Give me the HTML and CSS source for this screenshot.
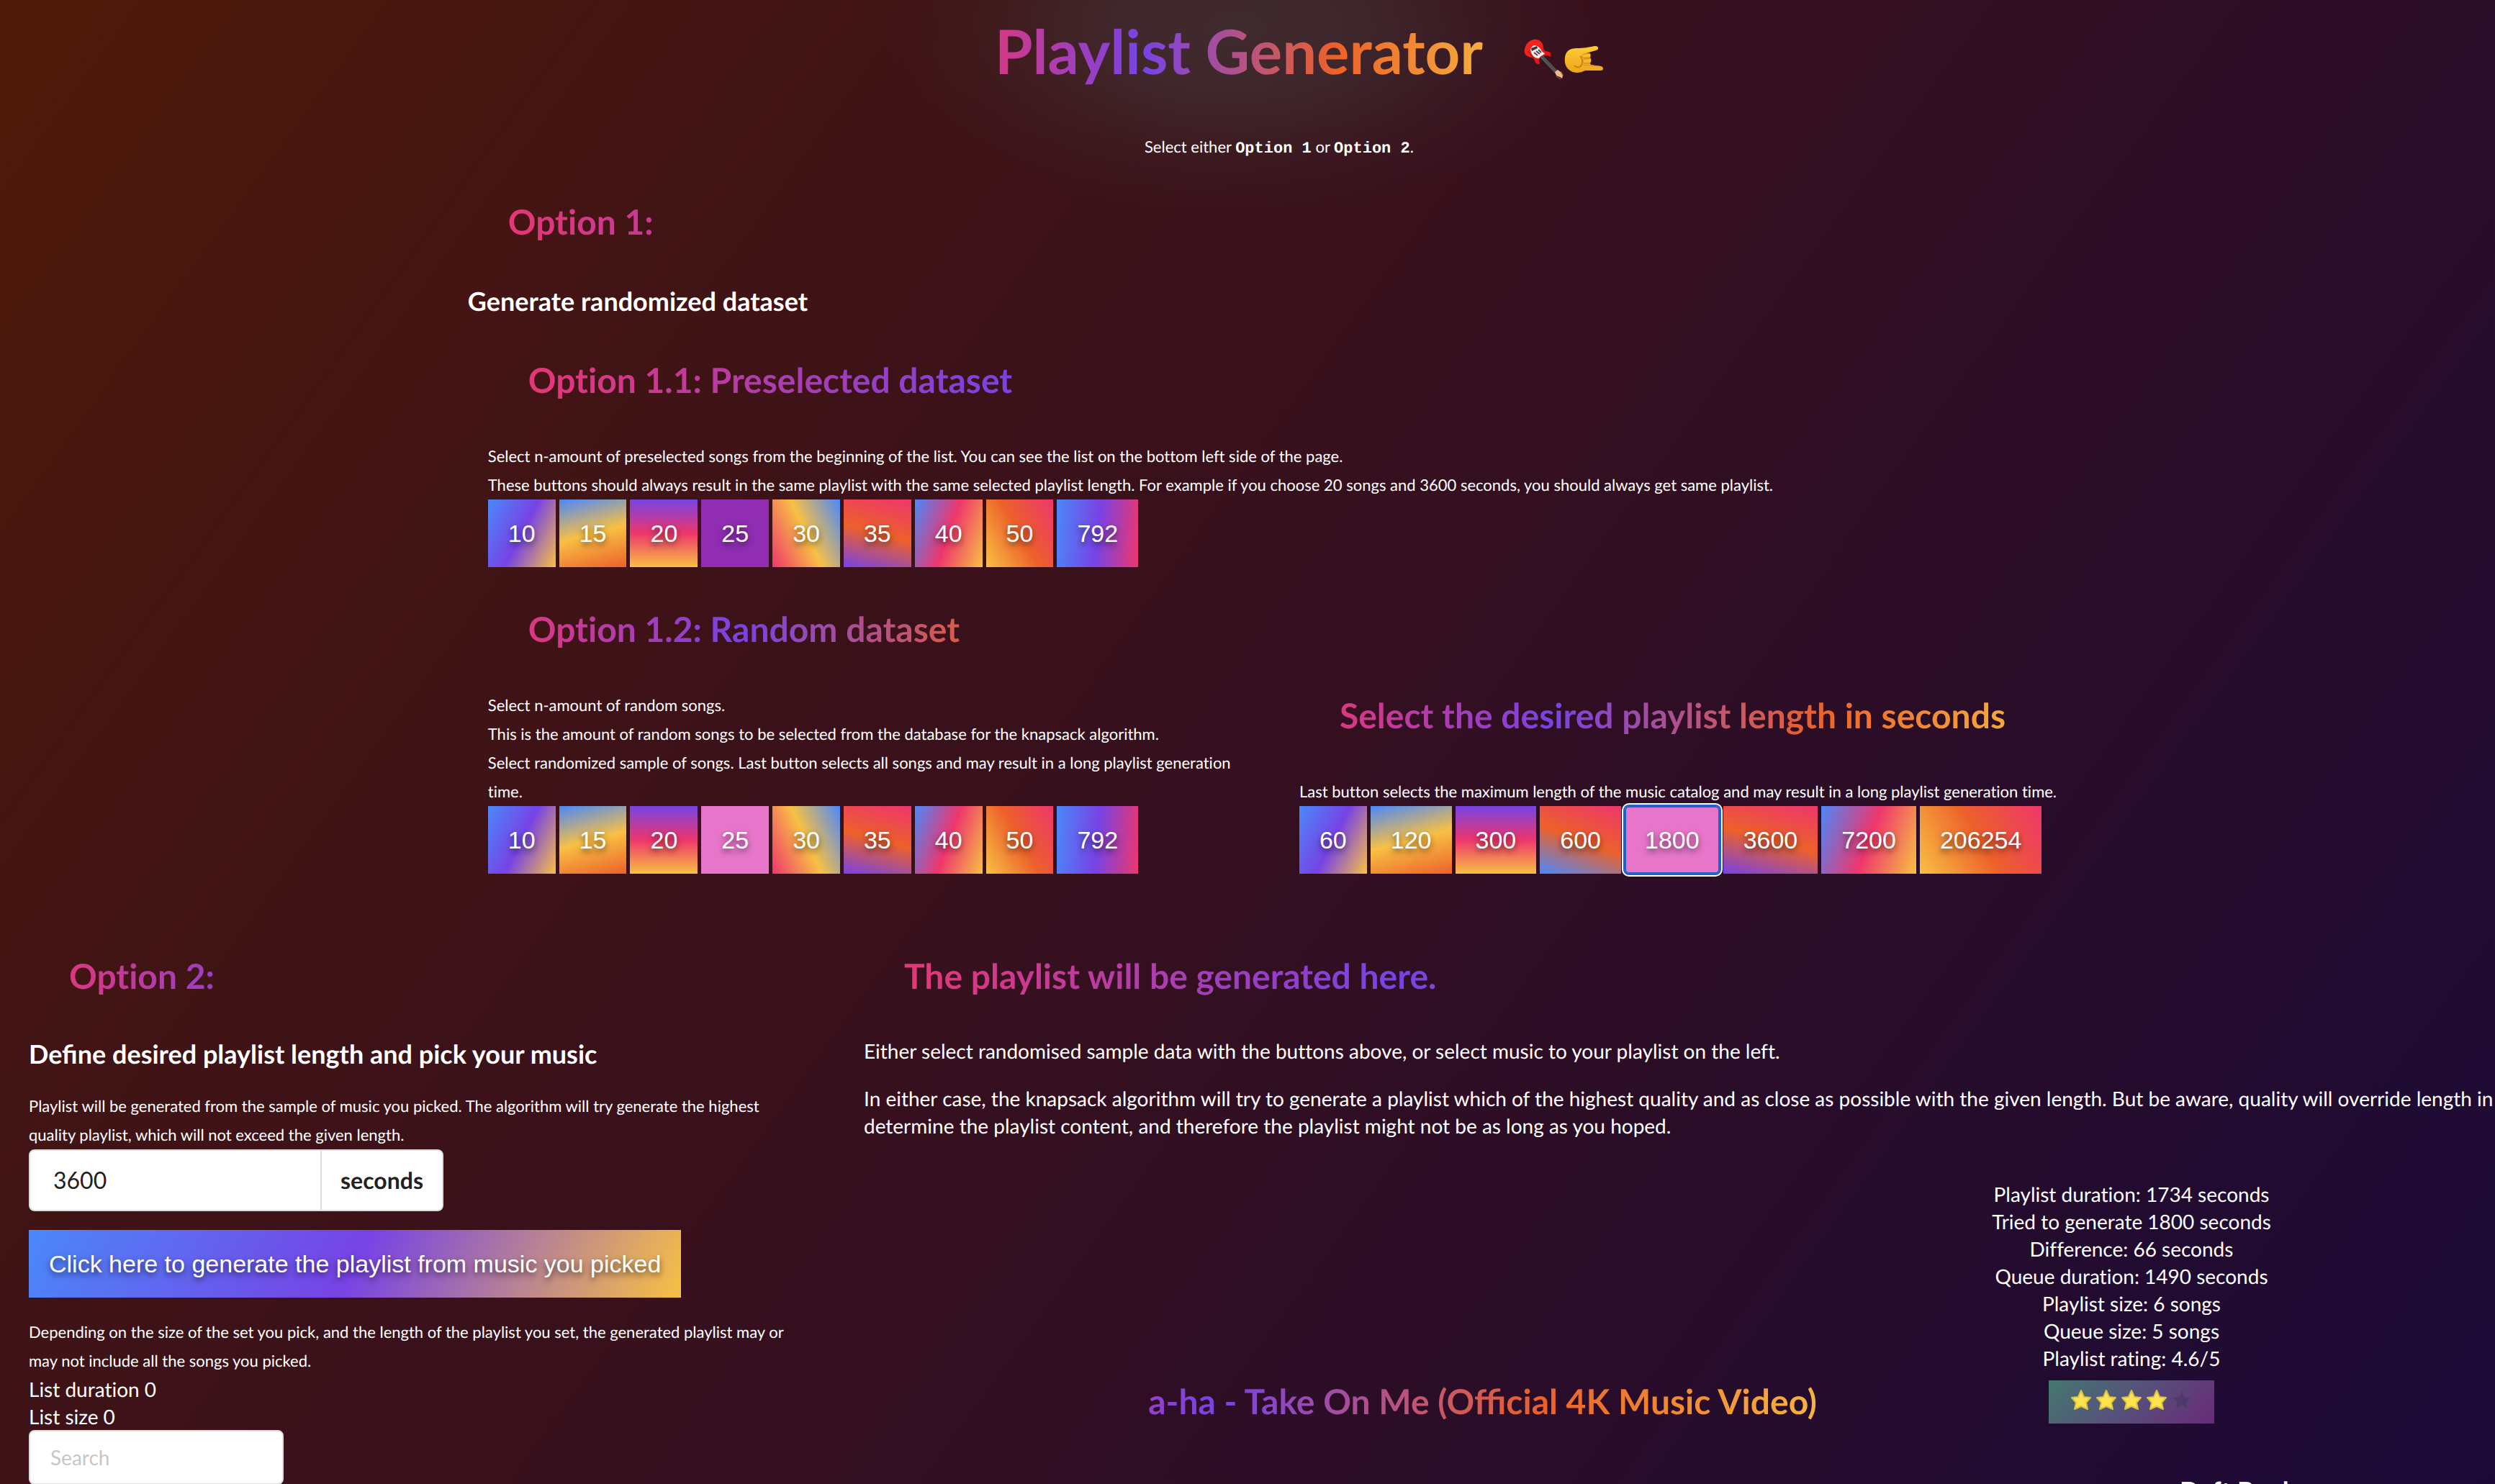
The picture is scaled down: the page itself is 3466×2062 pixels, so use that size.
FILE: index.html
```html
<!DOCTYPE html>
<html lang="en">
<head>
<meta charset="utf-8">
<title>Playlist Generator</title>
<link rel="stylesheet" href="styles.css">
</head>
<body>
<main class="page">
  <div class="top">
    <header class="masthead">
      <div class="title-row">
        <h1 class="gradient-text title">Playlist Generator</h1>
        <svg class="emoji" viewBox="0 0 56 58" role="img" aria-label="Guitar">
          <defs>
            <linearGradient id="gBody" x1="0" y1="0" x2="1" y2="1"><stop offset="0" stop-color="#ff2a1e"/><stop offset="1" stop-color="#d80f14"/></linearGradient>
          </defs>
          <path d="M25 24 L46 46" stroke="#4f4f52" stroke-width="5"/>
          <path d="M26 27 L45 47" stroke="#8c8c90" stroke-width="1" stroke-dasharray="1 3"/>
          <path d="M2 14 C4 5 12 0 18 1 C26 2 28 8 28 13 C29 18 32 17 36 18 C40 20 39 25 37 25 C35 22 31 24 27 24 C23 25 21 28 23 33 C23 36 20 36 17 33 C15 29 16 27 12 26 C6 25 0 22 2 14 Z" fill="url(#gBody)"/>
          <path d="M10 15 C12 9 16 8 19 10 C25 12 25 19 30 20 C28 23 24 23 22 27 C16 27 12 24 10 15 Z" fill="#f1eeee"/>
          <path d="M11 13 L19 10 L20 13 L12 17 Z" fill="#36343a"/>
          <path d="M15 19 L20 23 M18 17 L23 21 M21 15 L25 19" stroke="#4a484c" stroke-width="2"/>
          <path d="M7 17 L14 26" stroke="#45343a" stroke-width="1"/>
          <path d="M44 46 L48 43 L52 46 L55 51 L54 55 L51 53 L46 51 Z" fill="#f5b78c"/>
          <path d="M52 45 L56 51 M46 52 L52 56" stroke="#8b7770" stroke-width="1"/>
        </svg>
        <svg class="emoji" viewBox="0 0 56 58" role="img" aria-label="Sign of the horns">
          <defs>
            <linearGradient id="gHand" x1="0" y1="0" x2="0" y2="1"><stop offset="0" stop-color="#ffcb36"/><stop offset="1" stop-color="#eda51c"/></linearGradient>
          </defs>
          <path d="M2 26 C3 16 10 13 18 13 C28 13 34 12 43 10 C49 9 50 15 45 16 L31 20 C37 19 39 21 37 26 C39 28 39 31 37 34 L38 36 L52 38 C56 39 56 44 52 44 L30 44 C23 48 14 48 9 44 C3 40 1 33 2 26 Z" fill="url(#gHand)"/>
          <path d="M37 20 L29 21 C24 22 26 26 28 26 L37 26 M37 27 L29 28 C26 29 26 34 29 34 L37 34" fill="none" stroke="#c9831a" stroke-width="1"/>
          <path d="M23 24 C27 27 27 33 24 38 C22 40 18 40 15 37" fill="none" stroke="#c9831a" stroke-width="2"/>
          <path d="M26 36 L50 38" stroke="#d9931c" stroke-width="1"/>
        </svg>
      </div>
      <p class="note">Select either <code>Option 1</code> or <code>Option 2</code>.</p>
    </header>

    <h2 class="gradient-text">Option 1:</h2>
    <h3>Generate randomized dataset</h3>

    <section class="inset preselected">
      <h2 class="gradient-text">Option 1.1: Preselected dataset</h2>
      <p class="note">Select n-amount of preselected songs from the beginning of the list. You can see the list on the bottom left side of the page.<br>These buttons should always result in the same playlist with the same selected playlist length. For example if you choose 20 songs and 3600 seconds, you should always get same playlist.</p>
      <div class="buttons">
        <button class="btn g-violet-gold" type="button">10</button>
        <button class="btn g-sky-ember" type="button">15</button>
        <button class="btn g-violet-rose" type="button">20</button>
        <button class="btn g-plum" type="button">25</button>
        <button class="btn g-sky-rose" type="button">30</button>
        <button class="btn g-rose-violet" type="button">35</button>
        <button class="btn g-sky-gold" type="button">40</button>
        <button class="btn g-gold-rose" type="button">50</button>
        <button class="btn g-blue-rose" type="button">792</button>
      </div>
    </section>

    <div class="split">
      <section class="inset">
        <h2 class="gradient-text">Option 1.2: Random dataset</h2>
        <p class="note">Select n-amount of random songs.<br>This is the amount of random songs to be selected from the database for the knapsack algorithm.<br>Select randomized sample of songs. Last button selects all songs and may result in a long playlist generation time.</p>
        <div class="buttons">
          <button class="btn g-violet-gold" type="button">10</button>
          <button class="btn g-sky-ember" type="button">15</button>
          <button class="btn g-violet-rose" type="button">20</button>
          <button class="btn g-pink" type="button">25</button>
          <button class="btn g-sky-rose" type="button">30</button>
          <button class="btn g-rose-violet" type="button">35</button>
          <button class="btn g-sky-gold" type="button">40</button>
          <button class="btn g-gold-rose" type="button">50</button>
          <button class="btn g-blue-rose" type="button">792</button>
        </div>
      </section>
      <section class="inset">
        <h2 class="gradient-text">Select the desired playlist length in seconds</h2>
        <p class="note">Last button selects the maximum length of the music catalog and may result in a long playlist generation time.</p>
        <div class="buttons">
          <button class="btn g-violet-gold" type="button">60</button>
          <button class="btn g-sky-ember" type="button">120</button>
          <button class="btn g-violet-rose" type="button">300</button>
          <button class="btn g-rose-sky" type="button">600</button>
          <button class="btn g-pink is-focused" type="button">1800</button>
          <button class="btn g-rose-violet" type="button">3600</button>
          <button class="btn g-sky-gold" type="button">7200</button>
          <button class="btn g-gold-rose" type="button">206254</button>
        </div>
      </section>
    </div>
  </div>

  <div class="bottom">
    <section class="picker">
      <h2 class="gradient-text">Option 2:</h2>
      <h3>Define desired playlist length and pick your music</h3>
      <p class="note">Playlist will be generated from the sample of music you picked. The algorithm will try generate the highest quality playlist, which will not exceed the given length.</p>
      <div class="length-field">
        <input class="length-input" id="length" type="text" value="3600">
        <label class="length-unit" for="length">seconds</label>
      </div>
      <button class="btn g-violet-gold generate" type="button">Click here to generate the playlist from music you picked</button>
      <p class="note">Depending on the size of the set you pick, and the length of the playlist you set, the generated playlist may or may not include all the songs you picked.</p>
      <div>List duration 0</div>
      <div>List size 0</div>
      <input class="search" type="search" placeholder="Search" aria-label="Search">
    </section>

    <section class="result">
      <h2 class="gradient-text">The playlist will be generated here.</h2>
      <p class="prose">Either select randomised sample data with the buttons above, or select music to your playlist on the left.</p>
      <p class="prose">In either case, the knapsack algorithm will try to generate a playlist which of the highest quality and as close as possible with the given length. But be aware, quality will override length in determine the playlist content, and therefore the playlist might not be as long as you hoped.</p>
      <div class="player">
        <h2 class="gradient-text song">a-ha - Take On Me (Official 4K Music Video)</h2>
        <div class="stats">
          <div>Playlist duration: 1734 seconds</div>
          <div>Tried to generate 1800 seconds</div>
          <div>Difference: 66 seconds</div>
          <div>Queue duration: 1490 seconds</div>
          <div>Playlist size: 6 songs</div>
          <div>Queue size: 5 songs</div>
          <div>Playlist rating: 4.6/5</div>
          <div class="rating" role="img" aria-label="4 of 5 stars">
            <svg class="star" viewBox="0 0 30 30"><path d="M15 2 L19 11 L28 12 L22 19 L24 28 L15 24 L6 28 L8 19 L2 12 L11 11 Z"/></svg>
            <svg class="star" viewBox="0 0 30 30"><path d="M15 2 L19 11 L28 12 L22 19 L24 28 L15 24 L6 28 L8 19 L2 12 L11 11 Z"/></svg>
            <svg class="star" viewBox="0 0 30 30"><path d="M15 2 L19 11 L28 12 L22 19 L24 28 L15 24 L6 28 L8 19 L2 12 L11 11 Z"/></svg>
            <svg class="star" viewBox="0 0 30 30"><path d="M15 2 L19 11 L28 12 L22 19 L24 28 L15 24 L6 28 L8 19 L2 12 L11 11 Z"/></svg>
            <svg class="star star-off" viewBox="0 0 30 30"><path d="M15 3 L18 11 L27 12 L21 18 L23 27 L15 22 L7 27 L9 18 L3 12 L12 11 Z"/></svg>
          </div>
        </div>
        <h3 class="artist">Daft Punk</h3>
      </div>
    </section>
  </div>
</main>
</body>
</html>
```
FILE: styles.css
```css
:root {
  --blue: #4b88fa;
  --violet: #7743e5;
  --rose: #ee366c;
  --ember: #ec612a;
  --gold: #f8c044;
}

* { box-sizing: border-box; }

body {
  margin: 0;
  height: 100vh;
  overflow: hidden;
  color: #fff;
  font: 28px/38px Lato, sans-serif;
  font-variant-ligatures: none;
  text-rendering: geometricPrecision;
  background: linear-gradient(126deg, #4f1a08 0%, #421414 22%, #36101e 48%, #2b0d27 68%, #1b0a38 100%);
}

h1, h2, h3, p { margin: 0; }

h2 { font-size: 48px; line-height: 60px; }
h3 { font-size: 36px; line-height: 46px; }

.gradient-text {
  padding: 0 56px;
  color: transparent;
  background: linear-gradient(90deg, var(--rose), var(--violet) 33%, var(--ember) 67%, var(--gold));
  -webkit-background-clip: text;
  background-clip: text;
}

.note { font-size: 22px; line-height: 40px; }
.note code { font: bold 22px/40px "Liberation Mono", monospace; }

.page { padding-left: 40px; }

.top {
  width: 65.8%;
  margin-left: 17.8%;
}

.masthead {
  position: relative;
  isolation: isolate;
  text-align: center;
  margin-bottom: 52px;
}
.masthead::before {
  content: "";
  position: absolute;
  z-index: -1;
  left: 50%;
  top: -220px;
  width: 980px;
  height: 520px;
  margin-left: -550px;
  background: radial-gradient(closest-side, rgba(68, 72, 72, .45), rgba(68, 72, 72, .38) 35%, rgba(68, 72, 72, .12) 72%, rgba(68, 72, 72, 0));
}
.title-row {
  display: flex;
  justify-content: center;
  align-items: center;
  height: 142px;
  margin-bottom: 42px;
}
.title { font-size: 85px; line-height: 120px; }
.emoji { width: 56px; height: 58px; margin-top: 24px; }

.top h3 { margin: 56px 0 58px; }
.inset { padding: 0 28px; }
.inset h2 { margin-bottom: 55px; }
.preselected { margin-bottom: 57px; }
.split {
  display: grid;
  grid-template-columns: 1fr 1fr;
  align-items: end;
}

.buttons { display: flex; gap: 5px; }
.btn {
  padding: 0 28px;
  border: 0;
  height: 94px;
  color: #fff;
  font: 34px/40px "Liberation Sans", Arial, sans-serif;
  text-shadow: 0 4px 8px rgba(0, 0, 0, .6);
}
.g-violet-gold { background: linear-gradient(117deg, var(--blue), var(--violet), var(--gold)); }
.g-sky-ember { background: linear-gradient(165deg, var(--blue), var(--gold), var(--ember)); }
.g-violet-rose { background: linear-gradient(180deg, var(--violet), var(--rose), var(--gold)); }
.g-sky-rose { background: linear-gradient(245deg, var(--blue), var(--gold), var(--rose)); }
.g-rose-violet { background: linear-gradient(195deg, var(--rose), var(--ember), var(--violet)); }
.g-rose-sky { background: linear-gradient(200deg, var(--rose), var(--ember), var(--blue)); }
.g-sky-gold { background: linear-gradient(110deg, var(--blue), var(--rose), var(--gold)); }
.g-gold-rose { background: linear-gradient(60deg, var(--gold), var(--ember), var(--rose)); }
.g-blue-rose { background: linear-gradient(95deg, var(--blue), var(--violet), var(--rose)); }
.g-plum { background: #912db3; }
.g-pink { background: #e776ca; }
.is-focused {
  border-radius: 6px;
  box-shadow: inset 0 0 0 2px #2063c8, 0 0 0 2px #2063c8, 0 0 0 4px #fff;
}

.bottom {
  display: grid;
  grid-template-columns: 1076fr 2266fr;
  gap: 84px;
  margin-top: 113px;
}
.bottom h2 { margin-bottom: 54px; }
.picker h3 { margin-bottom: 30px; font-variant-ligatures: normal; }

.length-field {
  display: flex;
  width: 576px;
  height: 86px;
  color: #212121;
  font-size: 32px;
  background: #fff;
  border: 2px solid #dededf;
  border-radius: 8px;
}
.length-input {
  flex: 1;
  min-width: 0;
  padding: 0 32px;
  border: 0;
  background: none;
  color: inherit;
  font: inherit;
}
.length-unit {
  padding: 0 26px;
  border-left: 2px solid #dededf;
  font-weight: bold;
  line-height: 82px;
}
.generate { display: block; margin: 26px 0 28px; }
.search {
  display: block;
  width: 354px;
  height: 76px;
  padding: 0 28px;
  border: 2px solid #dededf;
  border-radius: 8px;
  background: #fff;
  font: 28px/38px Lato, sans-serif;
}
.search::placeholder { color: #c7c7c7; }

.prose { margin-bottom: 28px; }
.player {
  display: grid;
  grid-template-columns: 1324fr 650fr;
  column-gap: 56px;
  margin: 57px 180px 0 56px;
}
.player .song { align-self: end; text-align: right; margin: 0; font-variant-ligatures: normal; }
.stats {
  display: flex;
  flex-direction: column;
  align-items: center;
}
.rating {
  display: flex;
  gap: 5px;
  margin-top: 12px;
  padding: 12px 30px 18px;
  background: linear-gradient(135deg, #45786f, #57507b 50%, #692a77);
}
.star { width: 30px; height: 30px; fill: #fce34f; stroke: #dcc443; stroke-width: 2; stroke-linejoin: round; }
.star-off { fill: #4c3a68; stroke: none; }
.artist { grid-column: 2; margin-top: 70px; padding-left: 392px; }
```
